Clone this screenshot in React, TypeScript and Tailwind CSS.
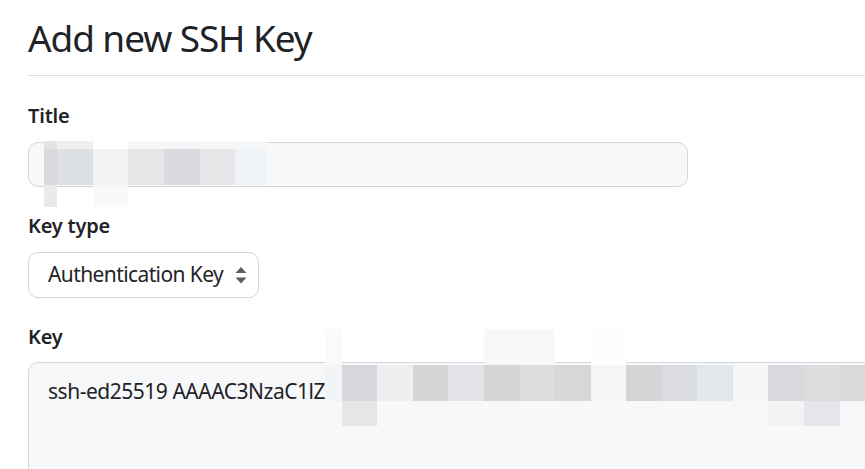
import React from "react";

type Block = [number, number, number, number, string];

const blocks: Block[] = [
  // title field mosaic
  [44, 141, 13, 8, "#e5e3e3"],
  [44, 149, 13, 36, "#d9d9db"],
  [44, 185, 13, 22, "#eaeaea"],
  [57, 141, 36, 8, "#efefef"],
  [57, 149, 36, 36, "#dde0e3"],
  [93, 141, 35, 8, "#ffffff"],
  [93, 149, 35, 36, "#f2f3f5"],
  [93, 185, 35, 22, "#f8f9fb"],
  [128, 141, 36, 8, "#f6f7f9"],
  [128, 149, 36, 36, "#e5e6e8"],
  [164, 141, 36, 8, "#f6f7f9"],
  [164, 149, 36, 36, "#dadbde"],
  [200, 141, 35, 8, "#f6f7f9"],
  [200, 149, 35, 36, "#e6e7e9"],
  [235, 141, 31, 8, "#f6f7f9"],
  [235, 149, 31, 36, "#eff3f6"],
  // key field mosaic
  [325, 329, 17, 36, "#fafafa"],
  [325, 365, 17, 36, "#f3f4f6"],
  [342, 365, 35, 36, "#d6d7da"],
  [342, 401, 35, 25, "#e6e7e9"],
  [377, 365, 36, 36, "#eeeff1"],
  [413, 365, 35, 36, "#d5d6d8"],
  [448, 365, 36, 36, "#e3e4e7"],
  [484, 329, 36, 36, "#f7f8f9"],
  [484, 365, 36, 36, "#d6d6d9"],
  [520, 329, 35, 36, "#f7f8f9"],
  [520, 365, 35, 36, "#dcdddf"],
  [555, 365, 36, 36, "#d6d7d9"],
  [591, 329, 35, 36, "#fdfdfd"],
  [591, 365, 35, 36, "#f4f5f7"],
  [626, 365, 36, 36, "#d5d5d7"],
  [662, 365, 35, 36, "#dbdcdf"],
  [697, 365, 36, 36, "#e4e8eb"],
  [733, 365, 35, 36, "#f5f6f8"],
  [768, 365, 36, 36, "#d8d9dc"],
  [768, 401, 36, 25, "#f2f3f5"],
  [804, 365, 36, 36, "#dcdddf"],
  [804, 401, 36, 25, "#e5e6e9"],
  [840, 365, 25, 36, "#d8d9db"],
];

export default function App() {
  return (
    <div
      className="relative w-[865px] h-[469px] overflow-hidden bg-white text-[#1f2328]"
      style={{ fontFamily: '"Noto Sans", "Open Sans", sans-serif' }}
    >
      <div className="pl-[28px] pt-[8px]">
        <div className="border-b border-[#d8dee4] pb-[7px]">
          <h2 className="h-[60px] whitespace-nowrap text-[37px] leading-[60px] font-normal tracking-[-1.1px]">
            Add new SSH Key
          </h2>
        </div>

        <div className="mt-[24px] flex flex-col">
          <label className="text-[20px] leading-[32px] font-semibold tracking-[-0.2px]">Title</label>
          <div className="mt-[10px] h-[45px] w-[660px] rounded-[10px] border border-[#d0d7de] bg-[#f6f8fa]" />

          <label className="mt-[23px] text-[20px] leading-[32px] font-semibold tracking-[-0.2px]">Key type</label>
          <div className="mt-[10px] flex h-[46px] w-[231px] items-center justify-between rounded-[10px] border border-[#d0d7de] bg-white pl-[19px] pr-[11px] text-[21px] tracking-[-0.6px]">
            <span className="whitespace-nowrap">Authentication Key</span>
            <svg width="12" height="17" viewBox="0 0 12 17" fill="#57606a">
              <path d="M6 0 L11.5 6 L0.5 6 Z" />
              <path d="M0.5 10.5 L11.5 10.5 L6 16.5 Z" />
            </svg>
          </div>

          <label className="mt-[23px] text-[20px] leading-[32px] font-semibold tracking-[-0.2px]">Key</label>
          <div className="mt-[9px] h-[200px] w-[900px] whitespace-nowrap rounded-[10px] border border-[#d0d7de] bg-[#f6f8fa] pl-[19px] pt-[12px] text-[21px] leading-[32px] tracking-[-0.48px]">
            ssh-ed25519 AAAAC3NzaC1lZ
          </div>
        </div>
      </div>

      {blocks.map(([x, y, w, h, c], i) => (
        <div
          key={i}
          className="absolute"
          style={{ left: x, top: y, width: w, height: h, background: c }}
        />
      ))}
    </div>
  );
}
